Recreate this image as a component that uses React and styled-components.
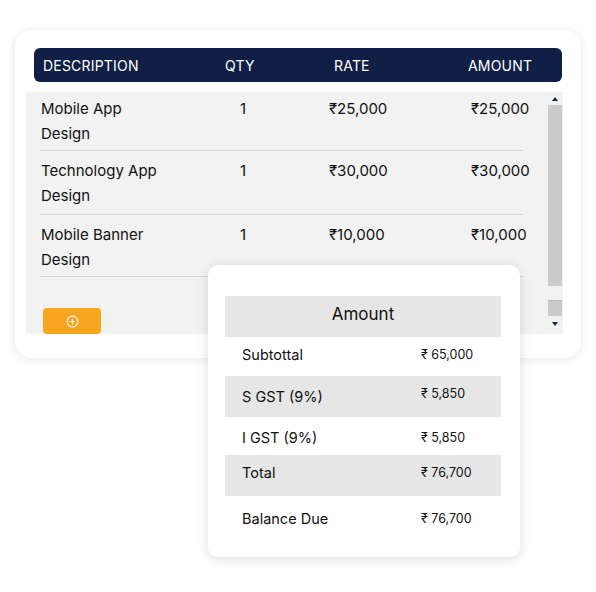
import React from "react";
import styled, { createGlobalStyle } from "styled-components";
import { CirclePlus } from "lucide-react";

const items = [
  { desc: ["Mobile App", "Design"], qty: 1, rate: "₹25,000", amount: "₹25,000", pad: "4px 0 4px" },
  { desc: ["Technology App", "Design"], qty: 1, rate: "₹30,000", amount: "₹30,000", pad: "7px 0 6px" },
  { desc: ["Mobile Banner", "Design"], qty: 1, rate: "₹10,000", amount: "₹10,000", pad: "7px 0 4px" },
];

const summary = [
  { label: "Subtottal", value: "₹ 65,000", shade: false, pad: "8px 0 11px" },
  { label: "S GST (9%)", value: "₹ 5,850", shade: true, pad: "11px 0 10px", lift: 3 },
  { label: "I GST (9%)", value: "₹ 5,850", shade: false, pad: "11px 0 7px" },
  { label: "Total", value: "₹ 76,700", shade: true, pad: "8px 0 13px" },
  { label: "Balance Due", value: "₹ 76,700", shade: false, pad: "13px 0 11px" },
];

function App() {
  return (
    <>
      <GlobalStyle />
      <Page>
        <Wrapper>
          <Card>
            <HeaderBar>
              <span>DESCRIPTION</span>
              <span>QTY</span>
              <span>RATE</span>
              <span>AMOUNT</span>
            </HeaderBar>
            <TableArea>
              <Rows>
                {items.map((item, i) => (
                  <Row key={i} $pad={item.pad}>
                    <div>
                      {item.desc.map((line) => (
                        <div key={line}>{line}</div>
                      ))}
                    </div>
                    <span>{item.qty}</span>
                    <span>{item.rate}</span>
                    <span>{item.amount}</span>
                  </Row>
                ))}
                <AddButton>
                  <CirclePlus size={13} strokeWidth={2} />
                </AddButton>
              </Rows>
              <Scrollbar>
                <ArrowBox $h={13}>
                  <Arrow $up />
                </ArrowBox>
                <Thumb $grow />
                <Gap />
                <Thumb />
                <ArrowBox $h={15}>
                  <Arrow />
                </ArrowBox>
              </Scrollbar>
            </TableArea>
          </Card>

          <Popup>
            <AmountHead>Amount</AmountHead>
            {summary.map((s) => (
              <SumRow key={s.label} $shade={s.shade} $pad={s.pad}>
                <span>{s.label}</span>
                <SumValue $lift={s.lift}>{s.value}</SumValue>
              </SumRow>
            ))}
          </Popup>
        </Wrapper>
      </Page>
    </>
  );
}

const GlobalStyle = createGlobalStyle`
  body {
    margin: 0;
    background: #ffffff;
    font-family: Inter, "Noto Sans", sans-serif;
    color: #111111;
  }
`;

const Page = styled.div`
  padding: 30px 15px;
  width: 596px;
  height: 592px;
  box-sizing: border-box;
`;

const Wrapper = styled.div`
  position: relative;
  width: 566px;
`;

const Card = styled.div`
  width: 566px;
  height: 328px;
  box-sizing: border-box;
  padding: 18px 18px 0 11px;
  border-radius: 16px;
  background: #fff;
  box-shadow: 0 1px 10px rgba(0, 0, 0, 0.1);
`;

const HeaderBar = styled.div`
  display: grid;
  grid-template-columns: 182px 109px 134px 1fr;
  align-items: center;
  height: 34px;
  margin: 0 1px 10px 8px;
  padding-left: 9px;
  border-radius: 6px;
  background: #0f1f45;
  color: #fff;
  font-size: 14px;
  font-weight: 400;
  letter-spacing: 0.2px;
`;

const TableArea = styled.div`
  display: flex;
  height: 242px;
  background: #f2f2f2;
`;

const Rows = styled.div`
  flex: 1;
  min-width: 0;
`;

const Row = styled.div`
  display: grid;
  grid-template-columns: 199px 89px 142px 1fr;
  margin: 0 25px 0 14px;
  padding: ${(p) => p.$pad};
  padding-left: 1px;
  border-bottom: 1px solid #d8d8d8;
  font-size: 15px;
  line-height: 25px;
  white-space: nowrap;
`;

const AddButton = styled.button`
  display: flex;
  align-items: center;
  justify-content: center;
  width: 58px;
  height: 26px;
  margin: 31px 0 0 17px;
  padding: 0;
  border: none;
  border-radius: 4px;
  background: #f8a51f;
  color: #fff;
`;

const Scrollbar = styled.div`
  display: flex;
  flex-direction: column;
  flex-shrink: 0;
  width: 14px;
  margin-right: 1px;
  padding-bottom: 3px;
`;

const ArrowBox = styled.div`
  display: flex;
  align-items: center;
  justify-content: center;
  height: ${(p) => p.$h}px;
  background: #f1f1f1;
`;

const Arrow = styled.div`
  width: 0;
  height: 0;
  border-left: 3px solid transparent;
  border-right: 3px solid transparent;
  ${(p) =>
    p.$up
      ? "border-bottom: 4px solid #14224a;"
      : "border-top: 4px solid #14224a;"}
`;

const Thumb = styled.div`
  height: ${(p) => (p.$grow ? "auto" : "15px")};
  flex: ${(p) => (p.$grow ? 1 : "none")};
  background: #cbcbcb;
`;

const Gap = styled.div`
  height: 14px;
  background: #f1f1f1;
  border-bottom: 1px solid #bdbdbd;
`;

const Popup = styled.div`
  position: absolute;
  left: 193px;
  top: 235px;
  width: 312px;
  height: 292px;
  box-sizing: border-box;
  padding: 31px 19px 0 17px;
  border-radius: 10px;
  background: #fff;
  box-shadow: 0 2px 12px rgba(0, 0, 0, 0.13);
`;

const AmountHead = styled.div`
  height: 41px;
  line-height: 37px;
  text-align: center;
  background: #e6e6e6;
  font-size: 17px;
  font-weight: 400;
`;

const SumRow = styled.div`
  display: grid;
  grid-template-columns: 179px 1fr;
  align-items: center;
  padding: ${(p) => p.$pad};
  padding-left: 17px;
  line-height: 20px;
  background: ${(p) => (p.$shade ? "#e6e6e6" : "#fff")};
  font-size: 14.5px;
`;

const SumValue = styled.span`
  font-size: 12.5px;
  position: relative;
  top: ${(p) => (p.$lift ? `-${p.$lift}px` : "0")};
`;

export default App;
